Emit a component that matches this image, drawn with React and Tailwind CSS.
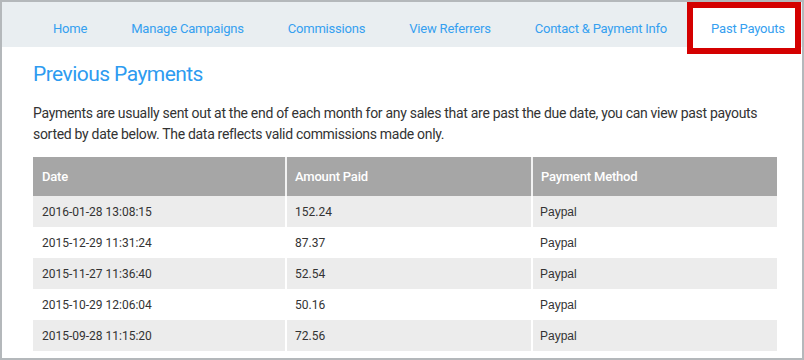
import React from 'react';

const navItems = ['Home', 'Manage Campaigns', 'Commissions', 'View Referrers', 'Contact & Payment Info'];

const payments = [
  { date: '2016-01-28 13:08:15', amount: '152.24', method: 'Paypal' },
  { date: '2015-12-29 11:31:24', amount: '87.37', method: 'Paypal' },
  { date: '2015-11-27 11:36:40', amount: '52.54', method: 'Paypal' },
  { date: '2015-10-29 12:06:04', amount: '50.16', method: 'Paypal' },
  { date: '2015-09-28 11:15:20', amount: '72.56', method: 'Paypal' },
];

function App() {
  return (
    <div className="w-[804px] h-[360px] border-2 border-[#b4b8bb] bg-white overflow-hidden font-['Roboto',sans-serif]">
      {/* Top nav */}
      <nav className="h-[45px] bg-[#e9eef1] flex items-start pl-[29px]">
        {navItems.map((item) => (
          <a key={item} className="px-[22px] pt-[19px] text-[13px] leading-[16px] tracking-[-0.2px] text-[#35a0f0] whitespace-nowrap">
            {item}
          </a>
        ))}
        <a className="-ml-[2px] w-[114px] h-[52px] shrink-0 border-[6px] border-[#d40000] bg-white pl-[18px] pt-[13px] text-[13px] leading-[16px] tracking-[-0.2px] text-[#35a0f0] whitespace-nowrap">
          Past Payouts
        </a>
      </nav>

      <div className="px-[31px]">
        <h1 className="mt-[15px] text-[21px] leading-[24px] tracking-[-0.55px] text-[#2d9bf0]">Previous Payments</h1>
        <p className="mt-[17px] text-[14px] leading-[21px] tracking-[-0.3px] text-[#333333]">
          Payments are usually sent out at the end of each month for any sales that are past the due date, you can view past payouts sorted by date below. The data reflects valid commissions made only.
        </p>

        <table className="mt-[12px] w-[744px] border-collapse table-fixed text-[12px]">
          <colgroup>
            <col className="w-[253px]" />
            <col className="w-[246px]" />
            <col className="w-[245px]" />
          </colgroup>
          <thead>
            <tr className="bg-[#a6a6a6] h-[39px] text-[13px] tracking-[-0.2px]">
              <th className="text-left font-medium text-white pl-[9px] border-r-2 border-[#f2f2f2]">Date</th>
              <th className="text-left font-medium text-white pl-[8px] border-r-2 border-[#f2f2f2]">Amount Paid</th>
              <th className="text-left font-medium text-white pl-[8px]">Payment Method</th>
            </tr>
          </thead>
          <tbody>
            {payments.map((p, i) => (
              <tr key={p.date} className={`h-[31px] ${i % 2 === 0 ? 'bg-[#ececec]' : 'bg-white'}`}>
                <td className="pl-[9px] text-[#333333] border-r-2 border-white">{p.date}</td>
                <td className="pl-[8px] text-[#333333] border-r-2 border-white">{p.amount}</td>
                <td className="pl-[7px] text-[#333333] font-['Liberation_Sans',sans-serif]">{p.method}</td>
              </tr>
            ))}
          </tbody>
        </table>
      </div>
    </div>
  );
}

export default App;
